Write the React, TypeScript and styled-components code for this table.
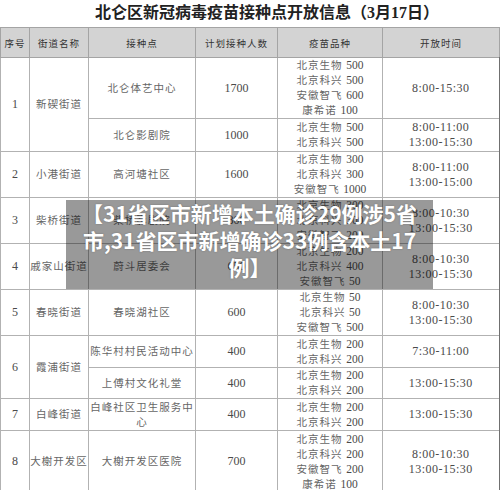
import React from 'react';
import styled, { createGlobalStyle } from 'styled-components';

type Site = {
  name: string;
  plan: string;
  vaccines: [string, string][];
  hours: string[];
  h: number;
};

type Street = { no: string; street: string; sites: Site[] };

const streets: Street[] = [
  {
    no: '1',
    street: '新碶街道',
    sites: [
      {
        name: '北仑体艺中心',
        plan: '1700',
        vaccines: [
          ['北京生物', '500'],
          ['北京科兴', '500'],
          ['安徽智飞', '600'],
          ['康希诺', '100'],
        ],
        hours: ['8:00-15:30'],
        h: 61,
      },
      {
        name: '北仑影剧院',
        plan: '1000',
        vaccines: [
          ['北京生物', '500'],
          ['北京科兴', '500'],
        ],
        hours: ['8:00-11:00', '13:00-15:30'],
        h: 33,
      },
    ],
  },
  {
    no: '2',
    street: '小港街道',
    sites: [
      {
        name: '高河塘社区',
        plan: '1600',
        vaccines: [
          ['北京生物', '300'],
          ['北京科兴', '300'],
          ['安徽智飞', '1000'],
        ],
        hours: ['8:00-11:00', '13:00-15:00'],
        h: 46,
      },
    ],
  },
  {
    no: '3',
    street: '柴桥街道',
    sites: [
      {
        name: '柴桥影剧院',
        plan: '800',
        vaccines: [
          ['北京生物', '300'],
          ['北京科兴', '300'],
          ['安徽智飞', '200'],
        ],
        hours: ['8:00-10:30', '13:00-15:30'],
        h: 46,
      },
    ],
  },
  {
    no: '4',
    street: '戚家山街道',
    sites: [
      {
        name: '蔚斗居委会',
        plan: '650',
        vaccines: [
          ['北京生物', '200'],
          ['北京科兴', '400'],
          ['安徽智飞', '50'],
        ],
        hours: ['8:00-10:30', '13:00-15:30'],
        h: 46,
      },
    ],
  },
  {
    no: '5',
    street: '春晓街道',
    sites: [
      {
        name: '春晓湖社区',
        plan: '600',
        vaccines: [
          ['北京生物', '50'],
          ['北京科兴', '50'],
          ['安徽智飞', '500'],
        ],
        hours: ['8:00-10:30', '13:00-15:30'],
        h: 46,
      },
    ],
  },
  {
    no: '6',
    street: '霞浦街道',
    sites: [
      {
        name: '陈华村村民活动中心',
        plan: '400',
        vaccines: [
          ['北京生物', '200'],
          ['北京科兴', '200'],
        ],
        hours: ['7:30-11:00'],
        h: 32,
      },
      {
        name: '上傅村文化礼堂',
        plan: '400',
        vaccines: [
          ['北京生物', '200'],
          ['北京科兴', '200'],
        ],
        hours: ['13:00-15:30'],
        h: 31,
      },
    ],
  },
  {
    no: '7',
    street: '白峰街道',
    sites: [
      {
        name: '白峰社区卫生服务中心',
        plan: '400',
        vaccines: [
          ['北京生物', '200'],
          ['北京科兴', '200'],
        ],
        hours: ['13:00-15:30'],
        h: 32,
      },
    ],
  },
  {
    no: '8',
    street: '大榭开发区',
    sites: [
      {
        name: '大榭开发区医院',
        plan: '700',
        vaccines: [
          ['北京生物', '200'],
          ['北京科兴', '200'],
          ['安徽智飞', '200'],
          ['康希诺', '100'],
        ],
        hours: ['8:00-10:30', '13:00-15:30'],
        h: 62,
      },
    ],
  },
];

const headers = ['序号', '街道名称', '接种点', '计划接种人数', '疫苗品种', '开放时间'];
const widths = [29, 59, 107, 82, 105, 117];

const App = () => {
  return (
    <Page>
      <GlobalStyle />
      <Title>北仑区新冠病毒疫苗接种点开放信息（3月17日）</Title>
      <Table>
        <colgroup>
          {widths.map((w, i) => (
            <col key={i} style={{ width: w }} />
          ))}
        </colgroup>
        <thead>
          <Row $h={30}>
            {headers.map((h) => (
              <HeadCell key={h}>{h}</HeadCell>
            ))}
          </Row>
        </thead>
        <tbody>
          {streets.map((s) =>
            s.sites.map((site, i) => (
              <Row key={s.no + site.name} $h={site.h}>
                {i === 0 && (
                  <>
                    <NumCell rowSpan={s.sites.length}>{s.no}</NumCell>
                    <Cell rowSpan={s.sites.length}>{s.street}</Cell>
                  </>
                )}
                <Cell>{site.name}</Cell>
                <NumCell>{site.plan}</NumCell>
                <Cell>
                  {site.vaccines.map(([v, n]) => (
                    <Line key={v}>
                      {v} <Amount>{n}</Amount>
                    </Line>
                  ))}
                </Cell>
                <TimeCell $last>
                  {site.hours.map((t) => (
                    <Line key={t}>{t}</Line>
                  ))}
                </TimeCell>
              </Row>
            ))
          )}
        </tbody>
      </Table>
      <Banner>
        【31省区市新增本土确诊29例涉5省
        <br />
        市,31省区市新增确诊33例含本土17
        <br />
        例】
      </Banner>
    </Page>
  );
};

export default App;

const GlobalStyle = createGlobalStyle`
  html, body {
    margin: 0;
    padding: 0;
    background: #fff;
  }
`;

const Page = styled.div`
  position: relative;
  width: 500px;
  height: 490px;
  overflow: hidden;
  background: #fff;
  font-family: 'Liberation Serif', 'Noto Sans CJK SC', serif;
`;

const Title = styled.h1`
  margin: 0;
  height: 27px;
  line-height: 26px;
  padding-left: 34px;
  font-size: 16px;
  font-weight: 700;
  letter-spacing: 0;
  text-align: center;
  color: #222;
`;

const Table = styled.table`
  width: 499px;
  table-layout: fixed;
  border-collapse: collapse;
  color: #666;
`;

const Row = styled.tr<{ $h: number }>`
  height: ${(p) => p.$h}px;
`;

const HeadCell = styled.th`
  padding: 0;
  background: #d3d3d3;
  border: 1px solid #a4a4a4;
  font-size: 9.5px;
  font-weight: 400;
  letter-spacing: 1px;
  color: #333;
`;

const Cell = styled.td`
  padding: 0;
  border: 1px solid #b2b2b2;
  text-align: center;
  vertical-align: middle;
  font-size: 10.5px;
  line-height: 15px;
  letter-spacing: 1px;
`;

const NumCell = styled(Cell)`
  font-size: 12px;
  letter-spacing: 0;
  color: #4a4a4a;
`;

const TimeCell = styled(Cell)<{ $last?: boolean }>`
  font-size: 12px;
  letter-spacing: 0.5px;
  color: #4a4a4a;
  border-right: ${(p) => (p.$last ? '2px solid #707070' : '1px solid #b2b2b2')};
`;

const Line = styled.div`
  white-space: nowrap;
`;

const Amount = styled.span`
  font-size: 11.5px;
  letter-spacing: 0;
  color: #4a4a4a;
`;

const Banner = styled.div`
  position: absolute;
  left: 66px;
  top: 200px;
  width: 367px;
  height: 89px;
  background: rgba(0, 0, 0, 0.4);
  color: #fff;
  font-family: 'Noto Sans CJK SC', sans-serif;
  font-size: 21px;
  font-weight: 700;
  line-height: 27px;
  text-align: center;
  text-shadow: 0 0 2px rgba(0, 0, 0, 0.25);
`;
